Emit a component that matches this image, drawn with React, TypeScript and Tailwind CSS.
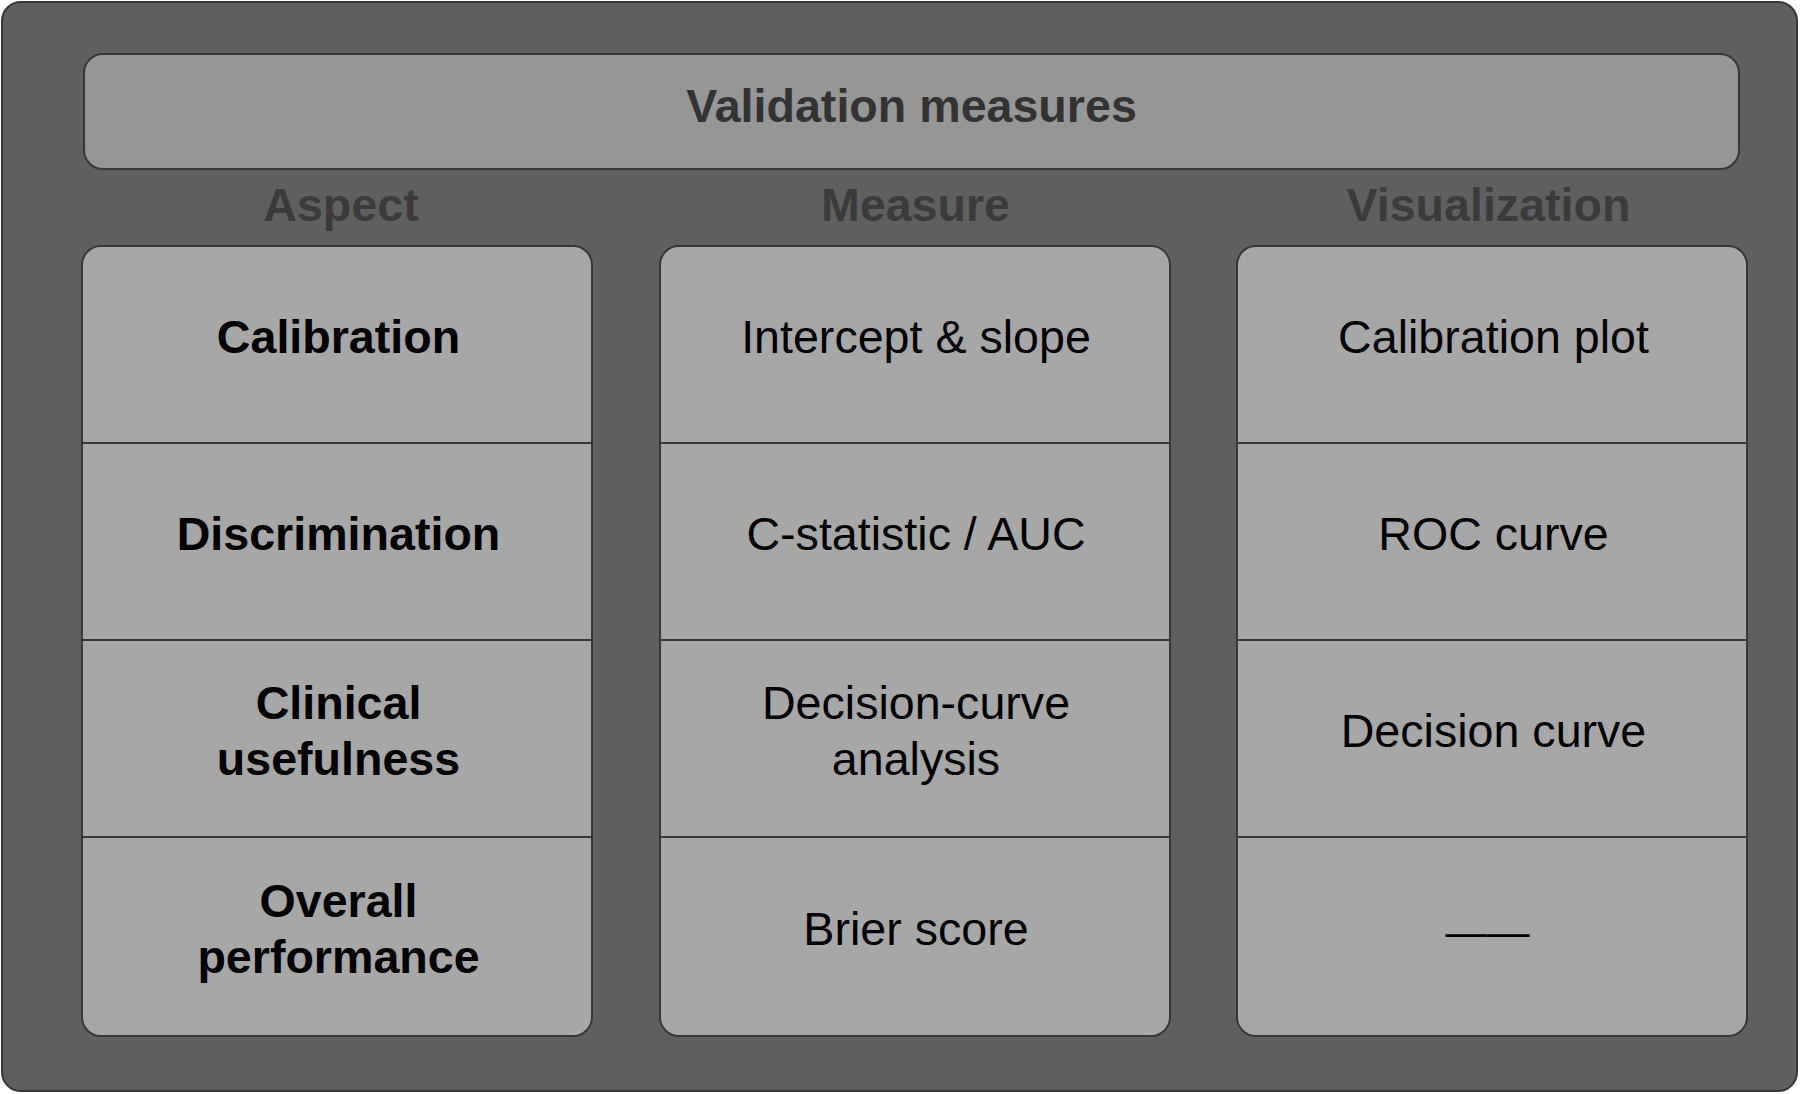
import React from "react";

const ASPECTS = [
  ["Calibration"],
  ["Discrimination"],
  ["Clinical", "usefulness"],
  ["Overall", "performance"],
];

const MEASURES = [
  ["Intercept & slope"],
  ["C-statistic / AUC"],
  ["Decision-curve", "analysis"],
  ["Brier score"],
];

const VISUALS = [["Calibration plot"], ["ROC curve"], ["Decision curve"], null];

const Column = ({
  title,
  rows,
  bold,
  titleClass,
}: {
  title: string;
  rows: (string[] | null)[];
  bold?: boolean;
  titleClass: string;
}) => {
  return (
    <div className="flex flex-col w-[512px]">
      <div
        className={
          "h-[75px] flex items-center justify-center text-[46.6px] font-bold text-[#3b3b3b] leading-none pb-[4px] " +
          titleClass
        }
      >
        {title}
      </div>
      <div className="flex flex-col rounded-[20px] border-2 border-[#383838] bg-[#a7a7a7] overflow-hidden">
        {rows.map((lines, index) => (
          <div
            key={index}
            className={
              "h-[197px] flex flex-col items-center justify-center text-center text-[46.6px] leading-[56px] text-black pb-[16px] pl-[3px] " +
              (bold ? "font-bold " : "") +
              (index !== rows.length - 1 ? "border-b-2 border-[#383838]" : "")
            }
          >
            {lines ? (
              lines.map((line) => <span key={line}>{line}</span>)
            ) : (
              <span className="text-[42px] leading-none pt-[6px] pr-[12px]">——</span>
            )}
          </div>
        ))}
      </div>
    </div>
  );
};

export default function App() {
  return (
    <div
      className="w-[1800px] h-[1094px] bg-white pl-[1px] pt-[1px]"
      style={{ fontFamily: '"Liberation Sans", Arial, sans-serif' }}
    >
      <div className="w-[1797px] h-[1091px] rounded-[20px] border-2 border-[#383838] bg-[#5f5f5f] pt-[50px] pl-[78px] pr-[48px] flex flex-col">
        <div className="ml-[2px] mr-[8px] h-[117px] rounded-[20px] border-2 border-[#383838] bg-[#969696] flex items-center justify-center pb-[9px]">
          <span className="text-[46.6px] font-bold text-[#333333]">
            Validation measures
          </span>
        </div>
        <div className="flex justify-between">
          <Column title="Aspect" rows={ASPECTS} bold titleClass="pl-[8px]" />
          <Column title="Measure" rows={MEASURES} titleClass="pl-[2px]" />
          <Column title="Visualization" rows={VISUALS} titleClass="pr-[7px]" />
        </div>
      </div>
    </div>
  );
}
